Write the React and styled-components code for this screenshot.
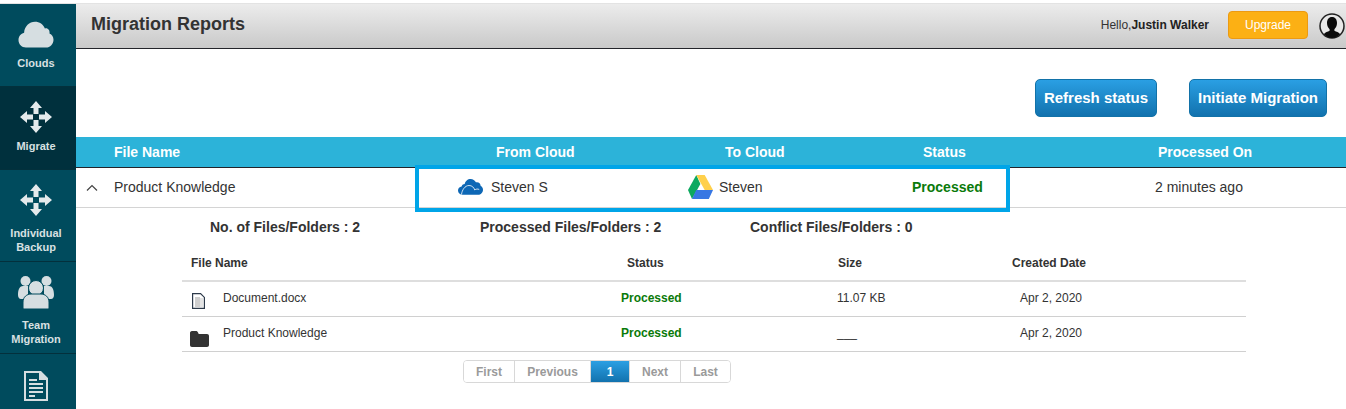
import React from 'react';
import styled, { createGlobalStyle } from 'styled-components';

const GlobalStyle = createGlobalStyle`
  html, body {
    margin: 0;
    padding: 0;
    background: #fff;
    font-family: "Liberation Sans", Arial, sans-serif;
    overflow: hidden;
  }
`;

const Page = styled.div`
  width: 1346px;
  height: 409px;
  padding-top: 4px;
  box-sizing: border-box;
  display: flex;
  overflow: hidden;
  background: linear-gradient(#fff 0, #fff 3px, #e3e3e3 3px, #e3e3e3 4px, #fff 4px);
`;

const Sidebar = styled.nav`
  width: 76px;
  flex: none;
  background: #004b5d;
  display: flex;
  flex-direction: column;
`;

const NavItem = styled.div`
  height: ${p => p.$height}px;
  flex: none;
  box-sizing: border-box;
  border-bottom: 1px solid #03303c;
  background: ${p => (p.$active ? '#00303d' : 'transparent')};
  padding: ${p => p.$top}px 4px 0 0;
  display: flex;
  flex-direction: column;
  align-items: center;
  color: #d8e0e2;
  font-size: 11px;
  font-weight: bold;
  line-height: 14px;
  text-align: center;
`;

const NavLabel = styled.span`
  margin-top: ${p => p.$gap}px;
`;

const Main = styled.main`
  flex: 1;
  display: flex;
  flex-direction: column;
  min-width: 0;
`;

const Header = styled.header`
  height: 45px;
  flex: none;
  box-sizing: border-box;
  border-bottom: 1px solid #23242a;
  background: linear-gradient(#ececec, #c9c9c9);
  display: flex;
  align-items: center;
  padding: 0 1px 0 15px;
`;

const Title = styled.h1`
  margin: 0 0 4px;
  font-size: 18px;
  font-weight: bold;
  color: #333;
  flex: 1;
`;

const Hello = styled.span`
  font-size: 12px;
  color: #333;
  margin: 0 19px 3px 0;
  b {
    color: #222;
  }
`;

const UpgradeButton = styled.button`
  width: 80px;
  height: 28px;
  box-sizing: border-box;
  border: 1px solid #ec9a12;
  border-radius: 4px;
  background: #fcb014;
  color: #fff;
  font: 12px "Liberation Sans", Arial, sans-serif;
  padding: 0;
  margin: 0 11px 3px 0;
`;

const Actions = styled.div`
  height: 88px;
  flex: none;
  display: flex;
  justify-content: flex-end;
  align-items: flex-start;
  gap: 32px;
  padding: 30px 19px 0 0;
  box-sizing: border-box;
`;

const BlueButton = styled.button`
  width: ${p => p.$width}px;
  height: 38px;
  box-sizing: border-box;
  border: 1px solid #1272a8;
  border-radius: 5px;
  background: linear-gradient(#2a9fe3, #1272ae);
  color: #fff;
  font: bold 15px "Liberation Sans", Arial, sans-serif;
  padding: 0 0 2px;
`;

const ReportHead = styled.div`
  height: 31px;
  flex: none;
  box-sizing: border-box;
  border-bottom: 1px solid #23242a;
  background: #2cb3d9;
  display: grid;
  grid-template-columns: 382px 229px 198px 235px 1fr;
  align-items: center;
  padding-left: 38px;
  color: #fff;
  font-size: 14px;
  font-weight: bold;
`;

const ReportRow = styled.div`
  position: relative;
  height: 40px;
  flex: none;
  box-sizing: border-box;
  border-bottom: 1px solid #d4d4d4;
  padding-bottom: 1px;
  display: grid;
  grid-template-columns: 38px 344px 230px 224px 243px 1fr;
  align-items: center;
  font-size: 14px;
  color: #333;
`;

const Chevron = styled.svg`
  justify-self: end;
  margin-right: 16px;
`;

const CloudCell = styled.div`
  display: flex;
  align-items: center;
  gap: ${p => p.$gap}px;
`;

const Processed = styled.span`
  color: #0a7a0a;
  font-weight: bold;
  font-size: ${p => p.$size}px;
`;

const Highlight = styled.div`
  position: absolute;
  left: 339px;
  top: -3px;
  width: 595px;
  height: 47px;
  box-sizing: border-box;
  border: 4px solid #00a5e8;
  pointer-events: none;
`;

const Details = styled.section`
  padding: 0 100px 0 106px;
`;

const Summary = styled.div`
  display: grid;
  grid-template-columns: 270px 270px auto;
  padding: 11px 0 0 28px;
  font-size: 14px;
  line-height: 16px;
  font-weight: bold;
  color: #333;
`;

const SubRow = styled.div`
  height: ${p => p.$height}px;
  box-sizing: border-box;
  border-bottom: ${p => p.$line || '1px solid #d0d0d0'};
  display: grid;
  grid-template-columns: 41px 398px 216px 183px 1fr;
  align-items: ${p => (p.$head ? 'center' : 'stretch')};
  font-size: 12px;
  color: #333;
  font-weight: ${p => (p.$head ? 'bold' : 'normal')};
`;

const SubHeadRow = styled(SubRow)`
  margin-top: 10px;
  grid-template-columns: 436px 211px 174px 1fr;
  padding-left: 9px;
`;

const SubIcon = styled.span`
  display: flex;
  align-items: flex-end;
  padding: 0 0 ${p => p.$pad}px ${p => p.$left}px;
`;

const SubCell = styled.span`
  align-self: center;
  margin-bottom: 2px;
`;

const Pager = styled.div`
  margin: 8px 0 0 281px;
  display: flex;
  width: 268px;
  height: 23px;
  box-sizing: border-box;
  border: 1px solid #d8d8d8;
  border-radius: 4px;
  overflow: hidden;
`;

const PageItem = styled.span`
  width: ${p => p.$width}px;
  flex: none;
  box-sizing: border-box;
  display: flex;
  align-items: center;
  justify-content: center;
  font-size: 12px;
  font-weight: bold;
  color: ${p => (p.$active ? '#fff' : '#9a9a9a')};
  background: ${p => (p.$active ? 'linear-gradient(#2a9fe3, #1272ae)' : '#fff')};
  border-right: ${p => (p.$last ? '0' : '1px solid #d8d8d8')};
`;

const CloudIcon = () => (
  <svg width="36" height="27" viewBox="0 0 36 27">
    <path fill="#d6dee1" d="M8 26.500C3.500 26.500 0.500 23 0.500 19c0-3.700 2.400-6.500 5.600-7.300C6.600 5.400 11.300 0.800 17 0.800c4.500 0 8.300 2.700 9.900 6.800 1-.4 1.800-.5 2.300-.2 2.300.9 2.600 3.400 2.300 5.100 2.500 1 4 3.300 4 6.200 0 4.300-3.300 7.800-7.500 7.800z" />
  </svg>
);

const MoveIcon = () => (
  <svg width="32" height="32" viewBox="0 0 32 32" fill="#e4eaec">
    <path d="M16 0l6 7h-3.500v6h-5V7H10z" />
    <path d="M16 32l-6-7h3.500v-6h5v6H22z" />
    <path d="M0 16l7-6v3.500h6v5H7V22z" />
    <path d="M32 16l-7 6v-3.500h-6v-5h6V10z" />
  </svg>
);

const TeamIcon = () => (
  <svg width="36" height="33" viewBox="0 0 36 33" fill="#d6dee1">
    <circle cx="7.500" cy="5" r="5" />
    <circle cx="28.500" cy="5" r="5" />
    <path d="M0 19c0-6 2-9 5-9h5v10l-2 3H3c-2 0-3-2-3-4zM36 19c0-6-2-9-5-9h-5v10l2 3h5c2 0 3-2 3-4z" />
    <circle cx="18" cy="12" r="7.500" fill="#d6dee1" stroke="#004b5d" strokeWidth="1" />
    <path d="M5 32v-6c0-5 4-8 8-8h10c4 0 8 3 8 8v6c0 .7-.5 1-1 1H6c-.5 0-1-.3-1-1z" stroke="#004b5d" strokeWidth="1" />
  </svg>
);

const ReportIcon = () => (
  <svg width="24" height="30" viewBox="0 0 24 30">
    <path fill="#d6dee1" fillRule="evenodd" d="M0 0h17l7 7v23H0zM2 2v26h20V9h-7V2z" />
    <path fill="#d6dee1" d="M17 2l5 5h-5zM5 8h8v2H5zM5 12h14v2H5zM5 16h14v2H5zM5 20h14v2H5zM5 24h6v2H5z" />
  </svg>
);

const Avatar = () => (
  <svg width="26" height="26" viewBox="0 0 26 26">
    <circle cx="13" cy="13" r="12" fill="#e8e8e8" stroke="#222" strokeWidth="1.500" />
    <path fill="#0b0b0b" d="M13 4c3.300 0 5 2.600 5 6 0 2.700-1.200 5-2.600 6.200v1.600c1.800.9 4.600 1.600 5.800 3.400A12 12 0 0 1 13 25a12 12 0 0 1-8.200-3.800c1.200-1.800 4-2.500 5.800-3.400v-1.600C9.200 15 8 12.700 8 10c0-3.400 1.700-6 5-6z" />
  </svg>
);

const OneDriveIcon = () => (
  <svg width="25" height="16" viewBox="0 0 25 16">
    <path fill="#0d67b5" d="M4.800 15.800C2 15.800 0 14 0 11.500c0-2.200 1.500-3.800 3.600-4.100C4.200 5.800 5.400 5 6.700 5c.5-2.900 3-5 5.900-5 2.300 0 4.300 1.300 5.300 3.300 2.800-.6 4.600 1.200 4.800 3.700 1.400.6 2.300 2 2.300 3.800 0 2.900-2.200 5-4.900 5z" />
    <path fill="none" stroke="#fff" strokeWidth="0.800" d="M3.500 15.500C4 11 7 6.500 11 6.500c3.200 0 4.800 2 5.800 4.500 1-1 3-1.300 4.400-.5" />
  </svg>
);

const DriveIcon = () => (
  <svg width="25" height="25" viewBox="0 0 25 25">
    <path fill="#0da960" d="M8.300 0L0 15l4 9 8.400-15z" />
    <path fill="#ffd04b" d="M8.300 0h8.400L25 15h-8.300z" />
    <path fill="#3777e3" d="M4 24l4.200-9H25l-4.200 9z" />
  </svg>
);

const FileIcon = () => (
  <svg width="13" height="16" viewBox="0 0 13 16">
    <path fill="#fff" stroke="#2d3a4a" strokeWidth="1.200" d="M.6.600h8l3.800 3.800v11H.6z" />
    <path fill="#cfcfcf" d="M3 4h5v10H3z" />
    <path fill="#e4e4e4" d="M8 5h3v9H8z" />
  </svg>
);

const FolderIcon = () => (
  <svg width="19" height="16" viewBox="0 0 19 16">
    <path fill="#333" d="M0 2c0-1 .7-2 2-2h4c1 0 1.500 .5 2 1.500L8.700 3H17c1.200 0 2 .8 2 2v9c0 1.200-.8 2-2 2H2c-1.200 0-2-.8-2-2z" />
  </svg>
);

const files = [
  { name: 'Document.docx', icon: <FileIcon />, pad: 7, left: 10, size: '11.07 KB' },
  { name: 'Product Knowledge', icon: <FolderIcon />, pad: 4, left: 8, size: '___' },
];

const pages = [
  { label: 'First', width: 51 },
  { label: 'Previous', width: 76 },
  { label: '1', width: 39, active: true },
  { label: 'Next', width: 51 },
  { label: 'Last', width: 49, last: true },
];

export default function App() {
  return (
    <Page>
      <GlobalStyle />
      <Sidebar>
        <NavItem $height={83} $top={17}>
          <CloudIcon />
          <NavLabel $gap={8}>Clouds</NavLabel>
        </NavItem>
        <NavItem $height={83} $top={14} $active>
          <MoveIcon />
          <NavLabel $gap={6}>Migrate</NavLabel>
        </NavItem>
        <NavItem $height={92} $top={14}>
          <MoveIcon />
          <NavLabel $gap={10}>
            Individual
            <br />
            Backup
          </NavLabel>
        </NavItem>
        <NavItem $height={92} $top={14}>
          <TeamIcon />
          <NavLabel $gap={9}>
            Team
            <br />
            Migration
          </NavLabel>
        </NavItem>
        <NavItem $height={60} $top={17}>
          <ReportIcon />
        </NavItem>
      </Sidebar>
      <Main>
        <Header>
          <Title>Migration Reports</Title>
          <Hello>
            Hello,<b>Justin Walker</b>
          </Hello>
          <UpgradeButton>Upgrade</UpgradeButton>
          <Avatar />
        </Header>
        <Actions>
          <BlueButton $width={122}>Refresh status</BlueButton>
          <BlueButton $width={138}>Initiate Migration</BlueButton>
        </Actions>
        <ReportHead>
          <span>File Name</span>
          <span>From Cloud</span>
          <span>To Cloud</span>
          <span>Status</span>
          <span>Processed On</span>
        </ReportHead>
        <ReportRow>
          <Chevron width="12" height="7" viewBox="0 0 12 7">
            <path d="M1 6.500L6 1.500l5 5" fill="none" stroke="#444" strokeWidth="1.200" />
          </Chevron>
          <span>Product Knowledge</span>
          <CloudCell $gap={8}>
            <OneDriveIcon />
            Steven S
          </CloudCell>
          <CloudCell $gap={6}>
            <DriveIcon />
            Steven
          </CloudCell>
          <Processed $size={14}>Processed</Processed>
          <span>2 minutes ago</span>
          <Highlight />
        </ReportRow>
        <Details>
          <Summary>
            <span>No. of Files/Folders : 2</span>
            <span>Processed Files/Folders : 2</span>
            <span>Conflict Files/Folders : 0</span>
          </Summary>
          <SubHeadRow $head $height={37} $line="2px solid #dedede">
            <span>File Name</span>
            <span>Status</span>
            <span>Size</span>
            <span>Created Date</span>
          </SubHeadRow>
          {files.map(file => (
            <SubRow key={file.name} $height={35}>
              <SubIcon $pad={file.pad} $left={file.left}>
                {file.icon}
              </SubIcon>
              <SubCell>{file.name}</SubCell>
              <SubCell>
                <Processed $size={12}>Processed</Processed>
              </SubCell>
              <SubCell>{file.size}</SubCell>
              <SubCell>Apr 2, 2020</SubCell>
            </SubRow>
          ))}
          <Pager>
            {pages.map(page => (
              <PageItem key={page.label} $width={page.width} $active={page.active} $last={page.last}>
                {page.label}
              </PageItem>
            ))}
          </Pager>
        </Details>
      </Main>
    </Page>
  );
}
